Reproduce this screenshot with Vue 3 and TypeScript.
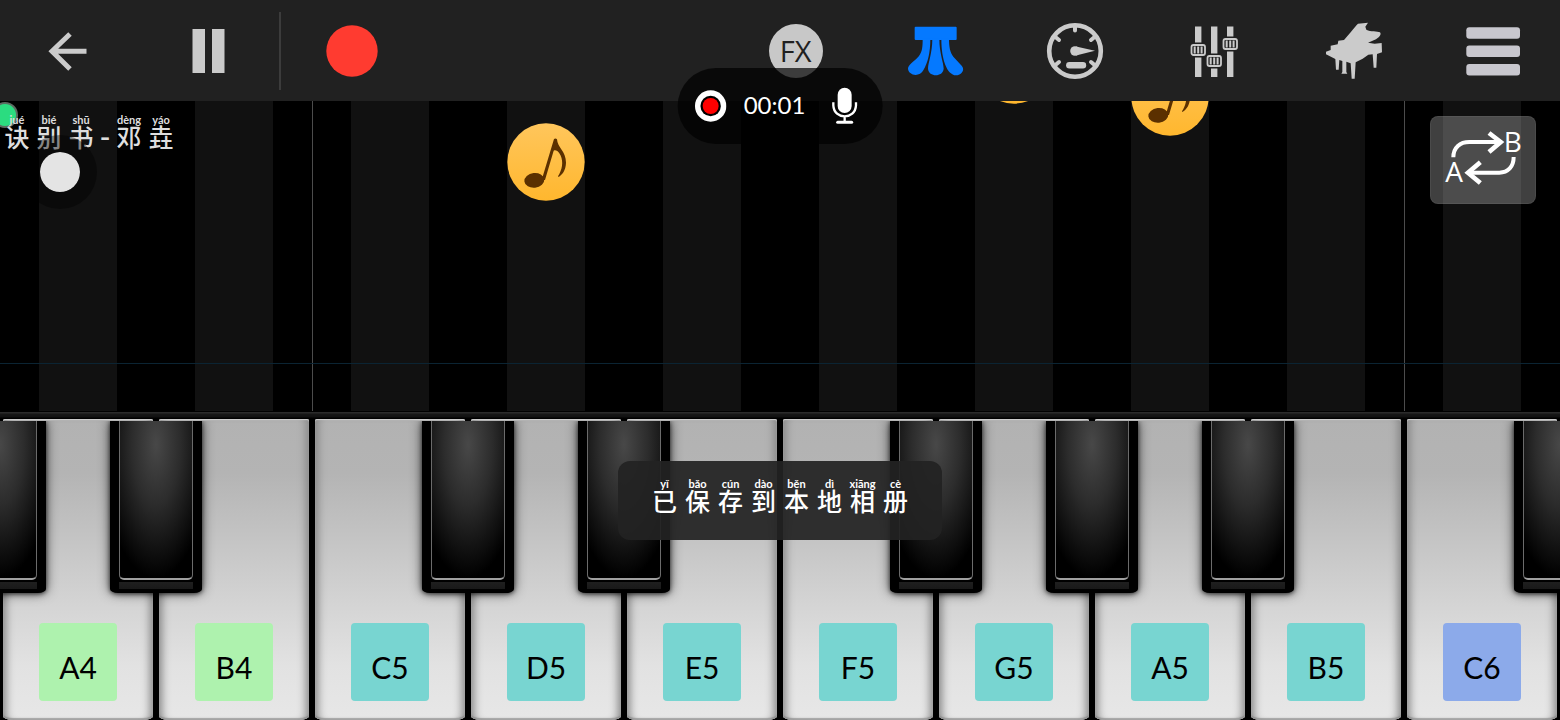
<script setup lang="ts">
interface PianoKey {
  name: string
  tone: 'green' | 'teal' | 'blue'
  sharp: boolean
  octaveStart?: boolean
  notes: number[]
}

interface Syllable {
  char: string
  pinyin: string
}

const keys: PianoKey[] = [
  { name: 'A4', tone: 'green', sharp: true, notes: [] },
  { name: 'B4', tone: 'green', sharp: false, notes: [] },
  { name: 'C5', tone: 'teal', sharp: true, octaveStart: true, notes: [] },
  { name: 'D5', tone: 'teal', sharp: true, notes: [22] },
  { name: 'E5', tone: 'teal', sharp: false, notes: [] },
  { name: 'F5', tone: 'teal', sharp: true, notes: [] },
  { name: 'G5', tone: 'teal', sharp: true, notes: [-75] },
  { name: 'A5', tone: 'teal', sharp: true, notes: [-43] },
  { name: 'B5', tone: 'teal', sharp: false, notes: [] },
  { name: 'C6', tone: 'blue', sharp: true, octaveStart: true, notes: [] },
]

const title: Syllable[] = [
  { char: '诀', pinyin: 'jué' },
  { char: '别', pinyin: 'bié' },
  { char: '书', pinyin: 'shū' },
  { char: '-', pinyin: '' },
  { char: '邓', pinyin: 'dèng' },
  { char: '垚', pinyin: 'yáo' },
]

const message: Syllable[] = [
  { char: '已', pinyin: 'yǐ' },
  { char: '保', pinyin: 'bǎo' },
  { char: '存', pinyin: 'cún' },
  { char: '到', pinyin: 'dào' },
  { char: '本', pinyin: 'běn' },
  { char: '地', pinyin: 'dì' },
  { char: '相', pinyin: 'xiāng' },
  { char: '册', pinyin: 'cè' },
]

const sliders = [
  { x: 14, y: 29 },
  { x: 30, y: 40 },
  { x: 46, y: 23 },
]
</script>

<template>
  <div class="app">
    <header class="toolbar">
      <div class="group-left">
        <button class="tool" type="button" aria-label="Back">
          <svg viewBox="0 0 60 60" fill="none" stroke="#cbcbcb" stroke-width="5">
            <path d="M32 13 14 30.300 32 48M14 30.300H48.500" />
          </svg>
        </button>
        <button class="tool" type="button" aria-label="Pause">
          <svg viewBox="0 0 60 60" fill="#cbcbcb">
            <path d="M14.500 8H27V52H14.500zM34 8H46.500V52H34z" />
          </svg>
        </button>
      </div>
      <span class="divider"></span>
      <button class="tool" type="button" aria-label="Record">
        <svg viewBox="0 0 60 60"><circle cx="30" cy="30" r="25.700" fill="#ff3b30" /></svg>
      </button>
      <div class="group-right">
        <button class="tool" type="button"><span class="fx">FX</span></button>
        <button class="tool" type="button" aria-label="Falling notes">
          <svg viewBox="46 63 180 180" fill="#0579ff">
            <rect x="75" y="80" width="126" height="40" rx="3" />
            <path d="M99 116H122C122 160 114 188 101 211 90 233 55 227 55 205 56 194 76 182 88 168 98 154 99 140 99 116z" />
            <path d="M128 116H149C149 160 162 188 162 206 160 232 117 232 115 206 115 188 128 160 128 116z" />
            <path d="M155 116H178C178 140 181 157 191 170L216 197C228 211 213 227 199 226 172 224 155 180 155 116z" />
          </svg>
        </button>
        <button class="tool" type="button" aria-label="Tempo">
          <svg viewBox="0 0 60 60" fill="none" stroke="#cbcbcb" stroke-linecap="round">
            <circle cx="30" cy="30" r="25.800" stroke-width="4.600" />
            <path d="M30 6V9.500M11 16.500 14 19M49 16.500 46 19M11 43.500 14 41M49 43.500 46 41" stroke-width="4" />
            <path d="M24.300 44.300H38" stroke-width="6.400" />
            <path d="M31 25.500 50 29.700 31 34.500z" fill="#cbcbcb" stroke="none" />
            <circle cx="30" cy="30" r="4.800" fill="#cbcbcb" stroke="none" />
          </svg>
        </button>
        <button class="tool" type="button" aria-label="Mixer">
          <svg viewBox="0 0 60 60">
            <g v-for="s in sliders" :key="s.x">
              <rect :x="s.x - 3" y="5.500" width="6.400" height="50.500" fill="#cbcbcb" />
              <rect :x="s.x - 8" :y="s.y - 7.500" width="16" height="15" fill="#212121" />
              <rect :x="s.x - 6.500" :y="s.y - 5" width="13.500" height="10" rx="2" fill="none" stroke="#cbcbcb" stroke-width="1.800" />
              <path :d="`M${s.x - 3.300} ${s.y - 3.500}v7M${s.x + 0.200} ${s.y - 3.500}v7M${s.x + 3.600} ${s.y - 3.500}v7`" stroke="#cbcbcb" stroke-width="2" />
            </g>
          </svg>
        </button>
        <button class="tool" type="button" aria-label="Instrument">
          <svg viewBox="72 63 180 180" fill="#cbcbcb">
            <path d="M78 155 92 150V137L113 133 115 122 132 120 152 97C162 85 168 76 174 71L204 68 196 80 199 89C212 96 232 92 240 97 246 104 236 113 228 118L204 128 224 131 245 129 246 157 231 162 229 203H221L218 163 205 164 188 176 167 187 164 236H155L152 190 139 185 139 216 142 221H124L127 216V183L118 180 116 209H108L106 177 78 163z" />
          </svg>
        </button>
        <button class="tool" type="button" aria-label="Menu">
          <svg viewBox="0 0 60 60" fill="#c8c7ce">
            <rect x="3.300" y="6.300" width="53.700" height="11.500" rx="3" />
            <rect x="3.300" y="24.600" width="53.700" height="11.500" rx="3" />
            <rect x="3.300" y="43" width="53.700" height="11.500" rx="3" />
          </svg>
        </button>
      </div>
    </header>

    <main class="stage">
      <div class="lanes">
        <div v-for="k in keys" :key="k.name" class="lane" :class="{ octave: k.octaveStart }">
          <div class="stripe">
            <svg v-for="n in k.notes" :key="n" class="note" :style="{ top: `${n}px` }" viewBox="81 67 234 234">
              <defs>
                <linearGradient id="amber" x1="0" y1="0" x2="0" y2="1">
                  <stop offset="0" stop-color="#ffc65c" />
                  <stop offset="1" stop-color="#ffb72e" />
                </linearGradient>
              </defs>
              <circle cx="198" cy="184" r="116" fill="url(#amber)" />
              <g fill="#5b3000">
                <ellipse cx="163" cy="239" rx="30" ry="22" transform="rotate(-6 163 239)" />
                <path d="M185 238 222 115Q227 111 231 116C232 140 258 152 258 186 257 210 247 221 236 229 232 228 236 224 238 220 249 200 250 176 238 158 233 150 226 147 221 150L195 238z" />
              </g>
            </svg>
          </div>
        </div>
      </div>
      <div class="guide"></div>
      <span class="status-dot"></span>
      <h1 class="title">
        <ruby v-for="s in title" :key="s.char" :class="{ dash: !s.pinyin }">{{ s.char }}<rt>{{ s.pinyin }}</rt></ruby>
      </h1>
      <span class="touch"></span>
      <button class="loop" type="button" aria-label="Loop from A to B">
        <svg viewBox="390 348 318 264" fill="none" stroke="#fff" stroke-width="12">
          <path d="M460 472C460 442 480 426 508 426H600M641 471C641 500 624 518 598 518H505" />
          <path d="M567 399 602 426 567 456M541 487 504 518 541 549" stroke-width="14" />
          <g class="loop-text">
            <text x="436" y="546">A</text>
            <text x="611" y="457">B</text>
          </g>
        </svg>
      </button>
    </main>

    <div class="rail"></div>

    <section class="keyboard">
      <div v-for="(k, i) in keys" :key="k.name" class="slot">
        <button class="white" type="button">
          <span class="label" :class="k.tone">{{ k.name }}</span>
        </button>
        <button v-if="i === 0" class="black first" type="button" aria-label="G♯4"><span class="cap"></span></button>
        <button v-if="k.sharp" class="black" type="button" :aria-label="`${k.name[0]}♯${k.name[1]}`"><span class="cap"></span></button>
      </div>
    </section>

    <div class="recorder">
      <svg class="rec" viewBox="0 0 32 32">
        <circle cx="16" cy="16" r="15.700" fill="#fff" />
        <circle cx="16" cy="16" r="10.200" fill="#000" />
        <circle cx="16" cy="16" r="8" fill="#f00" />
      </svg>
      <span class="time">00:01</span>
      <svg class="mic" viewBox="510 258 90 120" fill="none" stroke="#fff">
        <rect x="534" y="263" width="42" height="76" rx="21" fill="#fff" stroke="none" />
        <path d="M521 307V316C523 360 587 360 589 316V307M555 349V366" stroke-width="7" />
        <path d="M534 367H576" stroke-width="9" stroke-linecap="round" />
      </svg>
    </div>

    <div class="toast" role="status">
      <ruby v-for="s in message" :key="s.char">{{ s.char }}<rt>{{ s.pinyin }}</rt></ruby>
    </div>
  </div>
</template>

<style>
body {
  background: #000;
}
</style>

<style scoped>
.app {
  position: relative;
  display: flex;
  flex-direction: column;
  height: 100vh;
  min-height: 480px;
  overflow: hidden;
  background: #000;
  color: #fff;
  font-family: Lato, "Noto Sans CJK SC", sans-serif;
}

button {
  margin: 0;
  padding: 0;
  border: 0;
  background: none;
  color: inherit;
  font: inherit;
  cursor: pointer;
}

svg {
  display: block;
}

/* Toolbar */
.toolbar {
  display: flex;
  flex: none;
  align-items: center;
  height: 101px;
  padding: 0 37px 0 38px;
  box-sizing: border-box;
  background: #212121;
}

.group-left {
  display: flex;
  gap: 80px;
}

.group-right {
  display: flex;
  justify-content: space-between;
  width: 51%;
  margin-left: auto;
}

.tool {
  flex: none;
  width: 60px;
  height: 60px;
}

.divider {
  width: 2px;
  height: 78px;
  margin: 0 41px;
  background: #3c3c3c;
}

.fx {
  display: block;
  width: 54px;
  margin: 0 auto;
  border-radius: 50%;
  background: #c8c8c8;
  color: #212121;
  font: 400 29px/54px "Open Sans", sans-serif;
}

/* Falling notes */
.stage {
  position: relative;
  flex: 310 1 0;
  min-height: 0;
  overflow: hidden;
}

.lanes {
  display: grid;
  grid-template-columns: repeat(10, 1fr);
  height: 100%;
}

.lane {
  position: relative;
  display: flex;
  justify-content: center;
}

.lane.octave::before {
  content: "";
  position: absolute;
  inset: 0 auto 0 0;
  width: 1px;
  background: #4c4c4c;
}

.stripe {
  position: relative;
  width: 50%;
  background: #111;
}

.note {
  position: absolute;
  left: 0;
  width: 100%;
}

.guide {
  position: absolute;
  inset: auto 0 47px;
  height: 1px;
  background: #0b2433;
}

.status-dot {
  position: absolute;
  top: 1px;
  left: -8px;
  width: 22px;
  height: 22px;
  border: 2px solid #5c6b62;
  border-radius: 50%;
  background: #2bdc80;
}

ruby {
  display: flex;
  flex-direction: column-reverse;
  align-items: center;
  width: 33px;
  font: 500 25px/24px "Noto Sans CJK SC", sans-serif;
}

rt {
  display: block;
  height: 9px;
  font: 700 11px/9px Lato, "Noto Sans", sans-serif;
}

.title {
  position: absolute;
  top: 14px;
  left: 1px;
  display: flex;
  margin: 0;
  color: #dedede;
}

.title ruby {
  width: 32px;
}

.title .dash {
  width: 16px;
  font-family: Lato, sans-serif;
  font-size: 30px;
}

.touch {
  position: absolute;
  top: 34px;
  left: 23px;
  width: 40px;
  height: 40px;
  border: 17px solid rgba(0, 0, 0, 0.4);
  border-radius: 50%;
  background: #e4e4e4;
  background-clip: padding-box;
}

.loop {
  position: absolute;
  top: 15px;
  right: 24px;
  width: 106px;
  height: 88px;
  border-radius: 8px;
  background: rgba(255, 255, 255, 0.25);
  box-shadow: inset 0 0 0 1px rgba(255, 255, 255, 0.06);
}

.loop-text {
  fill: #fff;
  stroke: none;
  font: 500 84px "Open Sans", sans-serif;
}

/* Keyboard */
.rail {
  flex: none;
  height: 8px;
  background: linear-gradient(#000 1px, #2b2b2b 1px, #2b2b2b 2px, #171717 3px, #111 6px, #000 7px);
}

.keyboard {
  display: grid;
  grid-template-columns: repeat(10, 1fr);
  flex: 301 1 0;
  min-height: 0;
}

.slot {
  position: relative;
  padding: 0 3px;
}

.white {
  display: flex;
  align-items: flex-end;
  justify-content: center;
  width: 100%;
  height: 100%;
  padding-bottom: 19px;
  border-radius: 2px 2px 10px 10px / 2px 2px 4px 4px;
  background: linear-gradient(#b2b2b2 0, #b4b4b4 18%, #d3d3d3 60%, #e2e2e2 82%, #e7e7e7 100%);
  box-shadow: inset 0 1px 1px #cfcfcf, inset 9px 0 8px -6px #858585, inset -9px 0 8px -6px #858585, inset 0 -2px 1px #a8a8a8;
}

.label {
  width: 78px;
  height: 78px;
  box-sizing: border-box;
  padding-top: 5px;
  border-radius: 4px;
  color: #000;
  font-size: 30px;
  line-height: 78px;
}

.green {
  background: #aef2ae;
}

.teal {
  background: #78d5d1;
}

.blue {
  background: #8caaea;
}

.black {
  position: absolute;
  z-index: 1;
  top: 2px;
  left: 100%;
  display: flex;
  width: 92px;
  height: 57%;
  margin-left: -46px;
  padding: 0 9px 13px;
  border-radius: 0 0 8px 8px / 0 0 4px 4px;
  background: linear-gradient(#1f1f1f, #191919) center bottom 4px / 74px 7px no-repeat #000;
  box-shadow: 0 1px 4px rgba(0, 0, 0, 0.6), 0 0 12px rgba(0, 0, 0, 0.7);
  clip-path: inset(0 -16px -16px);
}

.black.first {
  left: 0;
}

.cap {
  flex: 1;
  align-self: stretch;
  border: 1px solid #6b6b6b;
  border-top: 0;
  border-bottom: 2px solid #a0a0a0;
  border-radius: 0 0 5px 5px;
  background: radial-gradient(ellipse 75% 85% at 50% 15%, #484848, #2c2c2c 45%, #000 100%);
}

/* Overlays */
.recorder {
  position: absolute;
  z-index: 2;
  top: 68px;
  left: 50%;
  display: flex;
  align-items: center;
  gap: 17px;
  height: 76px;
  padding: 0 23px 0 17px;
  border-radius: 38px;
  background: rgba(0, 0, 0, 0.7);
  font-size: 24px;
  transform: translateX(-50%);
}

.rec {
  width: 32px;
  height: 32px;
}

.time {
  padding: 0 7px 4px 0;
}

.mic {
  width: 30px;
  height: 40px;
}

.toast {
  position: absolute;
  z-index: 2;
  bottom: 180px;
  left: 50%;
  display: flex;
  padding: 18px 30px 28px;
  border-radius: 12px;
  background: rgba(34, 34, 34, 0.93);
  transform: translateX(-50%);
}
</style>
